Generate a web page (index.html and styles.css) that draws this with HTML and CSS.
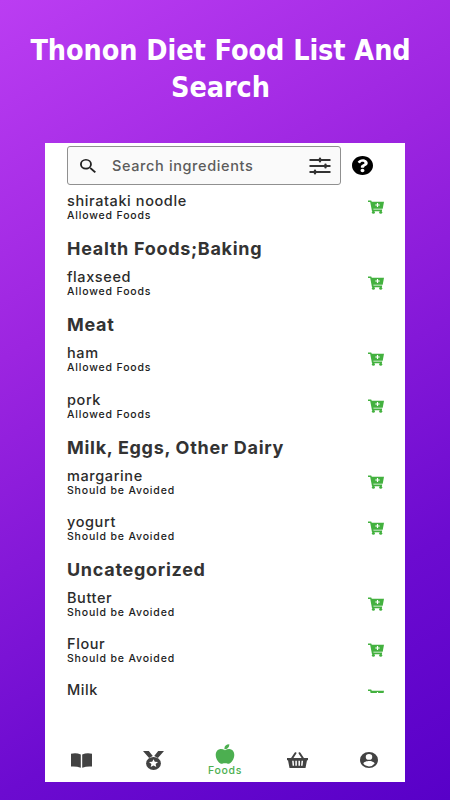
FILE: index.html
```html
<!DOCTYPE html>
<html lang="en">
<head>
    <meta charset="UTF-8">
    <meta name="viewport" content="width=device-width, initial-scale=1.0">
    <title>Thonon Diet Food List</title>
    <link rel="stylesheet" href="styles.css">
</head>
<body>
    <!-- Shared icons -->
    <svg class="sprite">
        <symbol id="cart" viewBox="0 0 16 14" preserveAspectRatio="none">
            <path fill="currentColor" d="M0 .4h3.200l.6 1.400H16l-1.300 7H5.300l.2.700h8.700l-.3 1.800H4L2.200 2H0z"/>
            <circle cx="5.4" cy="12.300" r="1.500" fill="currentColor"/>
            <circle cx="12.7" cy="12.300" r="1.500" fill="currentColor"/>
            <path stroke="#fff" stroke-width="1.2" d="M9.5 3v4M7.3 5h4.4"/>
        </symbol>
    </svg>

    <h1>Thonon Diet Food List And Search</h1>

    <main class="screen">
        <!-- Search -->
        <div class="search-row">
            <div class="search-box">
                <svg class="icon-search" viewBox="3 3 17.5 17.5" preserveAspectRatio="none"><path fill="#222" d="M15.5 14h-.79l-.28-.27A6.47 6.47 0 0 0 16 9.5 6.5 6.5 0 1 0 9.5 16c1.61 0 3.09-.59 4.23-1.57l.27.28v.79l5 4.99L20.49 19l-4.99-5zm-6 0a4.5 4.5 0 1 1 0-9 4.5 4.5 0 0 1 0 9z"/></svg>
                <span>Search ingredients</span>
                <svg class="icon-filter" viewBox="0 0 22 18">
                    <path stroke="#333" stroke-width="1.9" d="M.5 3h21M.5 9h21M.5 15h21"/>
                    <path stroke="#333" stroke-width="2.4" stroke-linecap="round" d="M11 1.7v2.6M16.5 7.7v2.6M6 13.7v2.6"/>
                </svg>
            </div>
            <svg class="icon-help" viewBox="8 8 496 496" preserveAspectRatio="none"><path d="M504 256c0 137-111 248-248 248S8 393 8 256 119 8 256 8s248 111 248 248zM262.7 90c-54.5 0-89.3 23-116.5 63.8-3.5 5.3-2.4 12.4 2.7 16.3l34.7 26.3c5.2 3.9 12.6 3 16.7-2.1 17.9-22.7 30.1-35.8 57.3-35.8 20.4 0 45.7 13.1 45.7 33 0 15-12.4 22.7-32.5 34C247.1 238.5 216 254.9 216 296v4c0 6.6 5.4 12 12 12h56c6.6 0 12-5.4 12-12v-1.3c0-28.5 83.2-29.6 83.2-106.7 0-58-60.2-102-116.5-102zM256 338c-25.4 0-46 20.6-46 46s20.6 46 46 46 46-20.6 46-46-20.6-46-46-46z"/></svg>
        </div>

        <!-- Food list -->
        <div class="food-list">
            <div class="food first">
                <div><p class="name">shirataki noodle</p><p class="status">Allowed Foods</p></div>
                <svg class="cart"><use href="#cart"/></svg>
            </div>
            <h2>Health Foods;Baking</h2>
            <div class="food">
                <div><p class="name">flaxseed</p><p class="status">Allowed Foods</p></div>
                <svg class="cart"><use href="#cart"/></svg>
            </div>
            <h2>Meat</h2>
            <div class="food">
                <div><p class="name">ham</p><p class="status">Allowed Foods</p></div>
                <svg class="cart"><use href="#cart"/></svg>
            </div>
            <div class="food">
                <div><p class="name">pork</p><p class="status">Allowed Foods</p></div>
                <svg class="cart"><use href="#cart"/></svg>
            </div>
            <h2>Milk, Eggs, Other Dairy</h2>
            <div class="food">
                <div><p class="name">margarine</p><p class="status">Should be Avoided</p></div>
                <svg class="cart"><use href="#cart"/></svg>
            </div>
            <div class="food">
                <div><p class="name">yogurt</p><p class="status">Should be Avoided</p></div>
                <svg class="cart"><use href="#cart"/></svg>
            </div>
            <h2>Uncategorized</h2>
            <div class="food">
                <div><p class="name">Butter</p><p class="status">Should be Avoided</p></div>
                <svg class="cart"><use href="#cart"/></svg>
            </div>
            <div class="food">
                <div><p class="name">Flour</p><p class="status">Should be Avoided</p></div>
                <svg class="cart"><use href="#cart"/></svg>
            </div>
            <div class="food last">
                <p class="name">Milk</p>
                <div class="cart-peek"><svg class="cart"><use href="#cart"/></svg></div>
            </div>
        </div>

        <!-- Bottom navigation -->
        <nav>
            <a><svg width="21" height="15" viewBox="0 0 21 15"><path fill="#424242" d="M0 .8Q5-.4 9.8 1.4v13.4Q5 13 0 13.6zM21 .8Q16-.4 11.2 1.4v13.4Q16 13 21 13.6z"/></svg></a>
            <a><svg width="21" height="19" viewBox="0 0 21 19">
                <path fill="#424242" d="M0 0h5.8l4 5.1-3.7 1.8zM21 0h-5.8l-4 5.1 3.7 1.8z"/>
                <ellipse cx="10.5" cy="12.4" rx="7.4" ry="6.5" fill="#424242"/>
                <path fill="#fff" d="M10.5 8.2l1.3 2.6 3.2.3-2.4 2 .7 2.8-2.8-1.4-2.8 1.4.7-2.8-2.4-2 3.2-.3z"/>
            </svg></a>
            <a class="active">
                <svg width="20" height="20" viewBox="0 0 20 20"><path fill="#4caf50" d="M10 6.2C7.2 4.6 4.3 4.6 2.3 6.6.4 8.6.2 12.1 1.700 15.200c1.400 2.900 3.600 4.900 5.500 4.500 1.900-.5 3.700-.5 5.600 0 1.900.4 4.100-1.600 5.500-4.500 1.500-3.100 1.300-6.600-.6-8.600-2-2-4.900-2-7.700-.4zM9.400 5.200C9.200 2.200 11.100.3 14.300.3c.2 3-1.700 4.900-4.900 4.900z"/></svg>
                <span>Foods</span>
            </a>
            <a><svg width="21" height="17" viewBox="0 0 21 17">
                <path stroke="#424242" stroke-width="2" stroke-linecap="round" d="M8.4 1.2L4.6 7M12.6 1.2L16.4 7"/>
                <path fill="#424242" d="M0 6h21v2.2h-1L18.500 16H2.500L1 8.200H0z"/>
                <path stroke="#fff" stroke-width="1.5" d="M5.9 8.800l.5 5M9.100 8.800v5M12.200 8.800v5M15.300 8.800l-.5 5"/>
            </svg></a>
            <a><svg width="18" height="16" viewBox="2 2 20 20" preserveAspectRatio="none"><path fill="#424242" fill-rule="evenodd" d="M12 2a10 10 0 1 0 0 20 10 10 0 0 0 0-20zm0 2.500a3.600 3.600 0 1 1 0 7.200 3.600 3.600 0 0 1 0-7.200zm0 15.500c-2.600 0-5-1.400-6.300-3.500.1-2.100 4.200-3.200 6.300-3.200s6.200 1.100 6.300 3.200A7.500 7.500 0 0 1 12 20z"/></svg></a>
        </nav>
    </main>
</body>
</html>
```

FILE: styles.css
```css
/* Reset and Base Styles */
* {
    margin: 0;
    padding: 0;
    box-sizing: border-box;
}

body {
    width: 450px;
    height: 800px;
    overflow: hidden;
    background: linear-gradient(150deg, #bb3df2 0%, #9c25e0 34%, #6c0bd0 75%, #5800c8 100%);
    font-family: Inter, sans-serif;
    color: #2b2b2b;
}

.sprite {
    display: none;
}

svg {
    display: block;
    fill: none;
}

h1 {
    height: 143px;
    padding: 32px 20px 0 11px;
    font-family: "DejaVu Sans Condensed", "DejaVu Sans", sans-serif;
    font-stretch: condensed;
    font-size: 28.5px;
    line-height: 37px;
    font-weight: 700;
    letter-spacing: -0.07px;
    text-align: center;
    color: #fff;
}

.screen {
    display: flex;
    flex-direction: column;
    width: 360px;
    height: 639px;
    margin-left: 45px;
    background: #fff;
}

/* Search */
.search-row {
    display: flex;
    align-items: center;
    gap: 11px;
    height: 42px;
    padding: 3px 0 0 22px;
}

.search-box {
    display: flex;
    align-items: center;
    width: 274px;
    height: 39px;
    padding: 0 9px 0 12px;
    border: 1px solid #909090;
    border-radius: 3px;
    background: #fafafa;
}

.search-box span {
    flex: 1;
    padding-left: 16px;
    font-size: 14.5px;
    font-weight: 500;
    letter-spacing: 0.62px;
    color: #5c5c5c;
}

.icon-search {
    width: 16px;
    height: 14px;
}

.icon-filter {
    width: 22px;
    height: 18px;
}

.icon-help {
    width: 21px;
    height: 19px;
    fill: #000;
}

/* Food list */
.food-list {
    height: 517px;
    padding: 0 21px 0 22px;
}

.food {
    display: flex;
    justify-content: space-between;
    height: 46.1px;
    padding-top: 8px;
}

.food.first {
    height: 45px;
    padding-top: 7px;
}

.name {
    font-size: 14.5px;
    line-height: 18px;
    font-weight: 500;
    letter-spacing: 0.6px;
}

.food.last {
    height: auto;
    padding-top: 7.5px;
}

.status {
    font-size: 10.5px;
    line-height: 12px;
    font-weight: 500;
    letter-spacing: 0.83px;
    color: #1c1c1c;
}

.cart {
    width: 16px;
    height: 14px;
    margin-top: 8px;
    color: #43b13f;
}

/* Next row, only the top of the cart shows */
.cart-peek {
    height: 12px;
    overflow: hidden;
}

h2 {
    height: 30.2px;
    padding-top: 8px;
    font-size: 18px;
    line-height: 22px;
    font-weight: 650;
    letter-spacing: 0.7px;
    color: #333;
}

/* Bottom navigation */
nav {
    display: flex;
    height: 80px;
    padding-top: 36px;
}

nav a {
    display: flex;
    flex-direction: column;
    align-items: center;
    justify-content: center;
    width: 72px;
    height: 44px;
}

nav .active {
    padding-top: 1px;
    font-size: 10.5px;
    line-height: 14px;
    font-weight: 500;
    letter-spacing: 0.7px;
    color: #4caf50;
}
```
